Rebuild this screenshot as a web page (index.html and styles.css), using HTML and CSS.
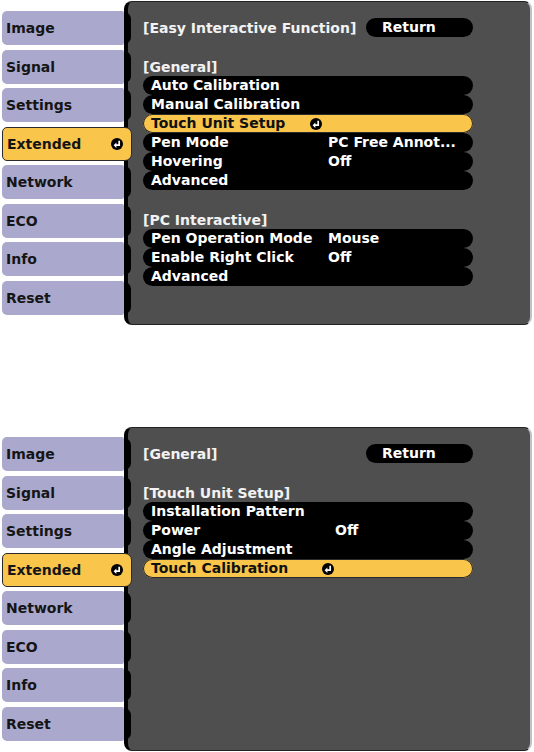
FILE: index.html
```html
<!DOCTYPE html>
<html lang="en">
<head>
	<meta charset="UTF-8">
	<title>Extended menu</title>
	<link rel="stylesheet" href="styles.css">
</head>
<body>
	<div class="screen s1">
		<ul class="side">
			<li>Image</li>
			<li>Signal</li>
			<li>Settings</li>
			<li class="on">Extended
				<svg class="ent" viewBox="0 0 12 12" width="12" height="12"><circle cx="6" cy="6" r="6"/><path d="M8.2 2.8V7.2H4.6" fill="none" stroke="#fff" stroke-width="1.7"/><path d="M5.4 4.5 2.6 7.2 5.4 9.9z" fill="#fff"/></svg>
			</li>
			<li>Network</li>
			<li>ECO</li>
			<li>Info</li>
			<li>Reset</li>
		</ul>
		<div class="panel">
			<div class="title"><span>[Easy Interactive Function]</span><span class="ret">Return</span></div>
			<div class="sec">[General]</div>
			<ul class="rows">
				<li><span>Auto Calibration</span></li>
				<li><span>Manual Calibration</span></li>
				<li class="on"><span>Touch Unit Setup</span>
					<svg class="ent" viewBox="0 0 12 12" width="12" height="12"><circle cx="6" cy="6" r="6"/><path d="M8.2 2.8V7.2H4.6" fill="none" stroke="#fff" stroke-width="1.7"/><path d="M5.4 4.5 2.6 7.2 5.4 9.9z" fill="#fff"/></svg>
				</li>
				<li><span>Pen Mode</span><i></i><span>PC Free Annot...</span></li>
				<li><span>Hovering</span><i></i><span>Off</span></li>
				<li><span>Advanced</span></li>
			</ul>
			<div class="sec">[PC Interactive]</div>
			<ul class="rows">
				<li><span>Pen Operation Mode</span><i></i><span>Mouse</span></li>
				<li><span>Enable Right Click</span><i></i><span>Off</span></li>
				<li><span>Advanced</span></li>
			</ul>
		</div>
	</div>

	<div class="screen s2">
		<ul class="side">
			<li>Image</li>
			<li>Signal</li>
			<li>Settings</li>
			<li class="on">Extended
				<svg class="ent" viewBox="0 0 12 12" width="12" height="12"><circle cx="6" cy="6" r="6"/><path d="M8.2 2.8V7.2H4.6" fill="none" stroke="#fff" stroke-width="1.7"/><path d="M5.4 4.5 2.6 7.2 5.4 9.9z" fill="#fff"/></svg>
			</li>
			<li>Network</li>
			<li>ECO</li>
			<li>Info</li>
			<li>Reset</li>
		</ul>
		<div class="panel">
			<div class="title"><span>[General]</span><span class="ret">Return</span></div>
			<div class="sec">[Touch Unit Setup]</div>
			<ul class="rows">
				<li><span>Installation Pattern</span></li>
				<li><span>Power</span><i></i><span>Off</span></li>
				<li><span>Angle Adjustment</span></li>
				<li class="on"><span>Touch Calibration</span>
					<svg class="ent" viewBox="0 0 12 12" width="12" height="12"><circle cx="6" cy="6" r="6"/><path d="M8.2 2.8V7.2H4.6" fill="none" stroke="#fff" stroke-width="1.7"/><path d="M5.4 4.5 2.6 7.2 5.4 9.9z" fill="#fff"/></svg>
				</li>
			</ul>
		</div>
	</div>
</body>
</html>
```

FILE: styles.css
```css
body{ margin:0; background:#fff; font:bold 14px "DejaVu Sans", sans-serif; }
ul,li{ margin:0; padding:0; list-style:none; }

.screen{ display:flex; height:324px; margin-top:1px; }
.screen + .screen{ margin-top:102px; }
.s1{ --lab:159px; --ic:18px; }
.s2{ --lab:171px; --ic:13px; }

/* left tabs */
.side{ width:124px; flex:none; box-sizing:border-box; padding:10px 0 0 2px; position:relative; z-index:1; }
.side li{ height:34px; margin-bottom:4.5px; padding-left:4px; display:flex; align-items:center; background:#aaa9cd; color:#151515; border-radius:5px 2px 2px 5px; position:relative; }
.side li::after{ content:""; position:absolute; left:100%; top:1px; bottom:1px; width:7px; background:#000; border-radius:0 8px 8px 0; }
.side li.on{ width:130px; box-sizing:border-box; justify-content:space-between; padding-right:8px; background:#f9c54b; border:1px solid #2a2a2a; border-radius:5px 7px 7px 5px; }
.side li.on::after{ display:none; }

/* right panel */
.panel{ flex:1; margin-right:2px; box-sizing:border-box; padding:16px 57px 0 15px; background:#4f4f4f; color:#f2f2f2; border:1px solid #222; border-left:4px solid #000; border-right:2px solid #c2c2c2; border-radius:8px; }
.title{ display:flex; justify-content:space-between; align-items:center; height:19px; white-space:nowrap; }
.ret{ width:107px; height:19px; line-height:19px; box-sizing:border-box; padding-left:16px; background:#000; color:#fff; border-radius:10px; }
.sec{ margin-top:21px; line-height:18px; }

.rows li{ height:19px; line-height:19px; display:grid; grid-template-columns:var(--lab) var(--ic) auto; align-items:center; padding-left:8px; background:#000; color:#fff; border-radius:9.5px; white-space:nowrap; }
.rows li.on{ background:#f9c54b; color:#111; box-shadow:inset 0 0 0 1px #2a2a2a; }
.rows .ent{ display:block; }
```
